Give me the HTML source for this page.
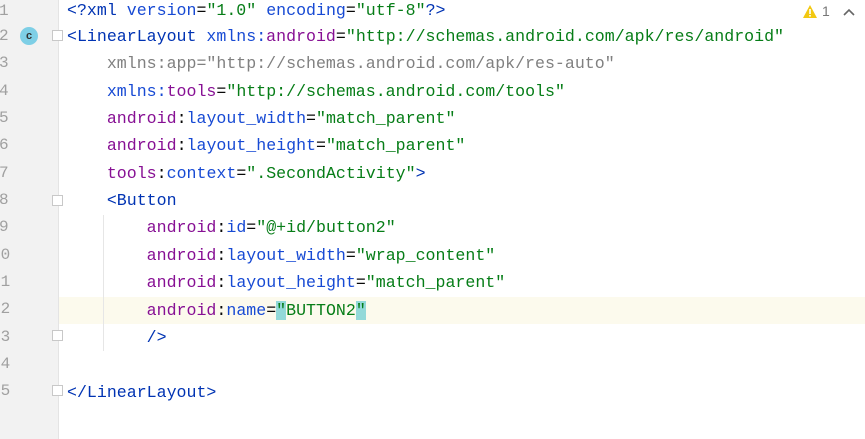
<!DOCTYPE html>
<html><head><meta charset="utf-8"><style>
body{margin:0;width:865px;height:439px;background:#fff;overflow:hidden;position:relative;font-family:"Liberation Mono",monospace;font-size:16.6px}
.g{position:absolute;left:0;top:0;width:58px;height:439px;background:#f2f2f2;border-right:1px solid #e4e4e4}
.ln{position:absolute;left:-1px;color:#a0a0a0;width:30px;font-size:16px}
.l{position:absolute;left:67px;white-space:pre;color:#080808;line-height:27px;height:27px}
.hl{position:absolute;left:59px;right:0;top:297px;height:27px;background:#fcfaed}
.t{color:#0033b3}.a{color:#174ad4}.n{color:#871094}.v{color:#067d17}.u{color:#808080}
.b{background:#93d9d9}
.guide{position:absolute;left:103px;top:215px;width:1px;height:136px;background:#e6e6e6}
.fold{position:absolute;left:52px;width:11px;height:11px;border:1px solid #c8c8c8;background:#fff;box-sizing:border-box}
</style></head><body>
<div class="g"></div>
<div class="hl"></div>
<div class="guide"></div>
<div class="ln" style="top:0px;line-height:22px">1</div>
<div class="ln" style="top:25px;line-height:22px">2</div>
<div class="ln" style="top:52px;line-height:22px">3</div>
<div class="ln" style="top:80px;line-height:22px">4</div>
<div class="ln" style="top:107px;line-height:22px">5</div>
<div class="ln" style="top:134px;line-height:22px">6</div>
<div class="ln" style="top:162px;line-height:22px">7</div>
<div class="ln" style="top:189px;line-height:22px">8</div>
<div class="ln" style="top:216px;line-height:22px">9</div>
<div class="ln" style="top:244px;line-height:22px;left:-9px">10</div>
<div class="ln" style="top:271px;line-height:22px;left:-9px">11</div>
<div class="ln" style="top:298px;line-height:22px;left:-9px">12</div>
<div class="ln" style="top:326px;line-height:22px;left:-9px">13</div>
<div class="ln" style="top:353px;line-height:22px;left:-9px">14</div>
<div class="ln" style="top:380px;line-height:22px;left:-9px">15</div>
<div style="position:absolute;left:20px;top:27px;width:18px;height:18px;border-radius:50%;background:#7ecfe6;color:#333;font-family:'Liberation Sans',sans-serif;font-size:11px;font-weight:bold;text-align:center;line-height:18px">c</div>
<div class="fold" style="top:30px"></div>
<div class="fold" style="top:195px"></div>
<div class="fold" style="top:330px"></div>
<div class="fold" style="top:385px"></div>
<div class="l" style="top:-3px"><span class="t">&lt;?xml </span><span class="a">version</span>=<span class="v">"1.0"</span> <span class="a">encoding</span>=<span class="v">"utf-8"</span><span class="t">?&gt;</span></div>
<div class="l" style="top:23px"><span class="t">&lt;LinearLayout </span><span class="a">xmlns:</span><span class="n">android</span>=<span class="v">"http://schemas.android.com/apk/res/android"</span></div>
<div class="l u" style="top:50px">    xmlns:app="http://schemas.android.com/apk/res-auto"</div>
<div class="l" style="top:78px">    <span class="a">xmlns:</span><span class="n">tools</span>=<span class="v">"http://schemas.android.com/tools"</span></div>
<div class="l" style="top:105px">    <span class="n">android</span>:<span class="a">layout_width</span>=<span class="v">"match_parent"</span></div>
<div class="l" style="top:132px">    <span class="n">android</span>:<span class="a">layout_height</span>=<span class="v">"match_parent"</span></div>
<div class="l" style="top:160px">    <span class="n">tools</span>:<span class="a">context</span>=<span class="v">".SecondActivity"</span><span class="t">&gt;</span></div>
<div class="l" style="top:187px">    <span class="t">&lt;Button</span></div>
<div class="l" style="top:214px">        <span class="n">android</span>:<span class="a">id</span>=<span class="v">"@+id/button2"</span></div>
<div class="l" style="top:242px">        <span class="n">android</span>:<span class="a">layout_width</span>=<span class="v">"wrap_content"</span></div>
<div class="l" style="top:269px">        <span class="n">android</span>:<span class="a">layout_height</span>=<span class="v">"match_parent"</span></div>
<div class="l" style="top:297px">        <span class="n">android</span>:<span class="a">name</span>=<span class="v"><span class="b">"</span>BUTTON2<span class="b">"</span></span></div>
<div class="l" style="top:324px">        <span class="t">/&gt;</span></div>
<div class="l" style="top:379px"><span class="t">&lt;/LinearLayout&gt;</span></div>
<svg style="position:absolute;left:803px;top:5px" width="14" height="13"><path d="M7 0L14 13H0Z" fill="#f2c811"/><rect x="6.2" y="4" width="1.6" height="5" fill="#fff"/><rect x="6.2" y="10" width="1.6" height="1.6" fill="#fff"/></svg>
<div style="position:absolute;left:822px;top:3px;font-family:'Liberation Sans',sans-serif;font-size:14px;color:#777">1</div>
<svg style="position:absolute;left:843px;top:8px" width="12" height="8"><path d="M1 7L6 2L11 7" stroke="#666" stroke-width="1.6" fill="none"/></svg>
</body></html>
